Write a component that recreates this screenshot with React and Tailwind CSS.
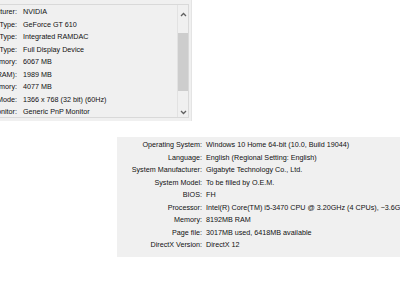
const displayRows = [
  ["Manufacturer:", "NVIDIA"],
  ["Chip Type:", "GeForce GT 610"],
  ["DAC Type:", "Integrated RAMDAC"],
  ["Device Type:", "Full Display Device"],
  ["Approx. Total Memory:", "6067 MB"],
  ["Display Memory (VRAM):", "1989 MB"],
  ["Shared Memory:", "4077 MB"],
  ["Current Display Mode:", "1366 x 768 (32 bit) (60Hz)"],
  ["Monitor:", "Generic PnP Monitor"],
];

const systemRows = [
  ["Operating System:", "Windows 10 Home 64-bit (10.0, Build 19044)"],
  ["Language:", "English (Regional Setting: English)"],
  ["System Manufacturer:", "Gigabyte Technology Co., Ltd."],
  ["System Model:", "To be filled by O.E.M."],
  ["BIOS:", "FH"],
  ["Processor:", "Intel(R) Core(TM) i5-3470 CPU @ 3.20GHz (4 CPUs), ~3.6GHz"],
  ["Memory:", "8192MB RAM"],
  ["Page file:", "3017MB used, 6418MB available"],
  ["DirectX Version:", "DirectX 12"],
];

function Chevron({ down }) {
  return (
    <svg width="7" height="5" viewBox="0 0 7 5">
      <polyline
        points={down ? "1,1 3.5,3.5 6,1" : "1,4 3.5,1.5 6,4"}
        fill="none"
        stroke="#606060"
        strokeWidth="1.3"
      />
    </svg>
  );
}

function InfoRow({ label, value, labelWidth, gap }) {
  return (
    <div className="flex whitespace-nowrap leading-[12.5px]">
      <div className={`${labelWidth} shrink-0 text-right`}>{label}</div>
      <div className={gap}>{value}</div>
    </div>
  );
}

export default function App() {
  return (
    <div
      className="w-[400px] h-[300px] bg-white overflow-hidden text-[7.2px] text-[#111]"
      style={{ fontFamily: '"Liberation Sans", Arial, sans-serif' }}
    >
      {/* display device list */}
      <div className="w-[192px] h-[121px] bg-[#f0f0f0] border-r border-[#e4e4e4] pt-[4px] pr-[2px] pb-[3px]">
        <div className="h-full flex border border-l-0 border-[#d9d9d9]">
          <div className="flex-1 overflow-hidden pt-[1px]">
            <div className="-ml-[100px]">
              {displayRows.map(([label, value]) => (
                <InfoRow key={label} label={label} value={value} labelWidth="w-[117px]" gap="pl-[6px]" />
              ))}
            </div>
          </div>
          <div className="w-[11px] flex flex-col border-l border-[#e2e2e2]">
            <div className="h-[18px] flex items-center justify-center">
              <Chevron />
            </div>
            <div className="mt-[10px] h-[58px] bg-[#cdcdcd]"></div>
            <div className="flex-1"></div>
            <div className="h-[10px] flex items-center justify-center">
              <Chevron down />
            </div>
          </div>
        </div>
      </div>

      {/* system information */}
      <div className="ml-[117px] mt-[16px] h-[120px] bg-[#f0f0f0] overflow-hidden pt-[2px]">
        {systemRows.map(([label, value]) => (
          <InfoRow key={label} label={label} value={value} labelWidth="w-[85px]" gap="pl-[4px]" />
        ))}
      </div>
    </div>
  );
}
